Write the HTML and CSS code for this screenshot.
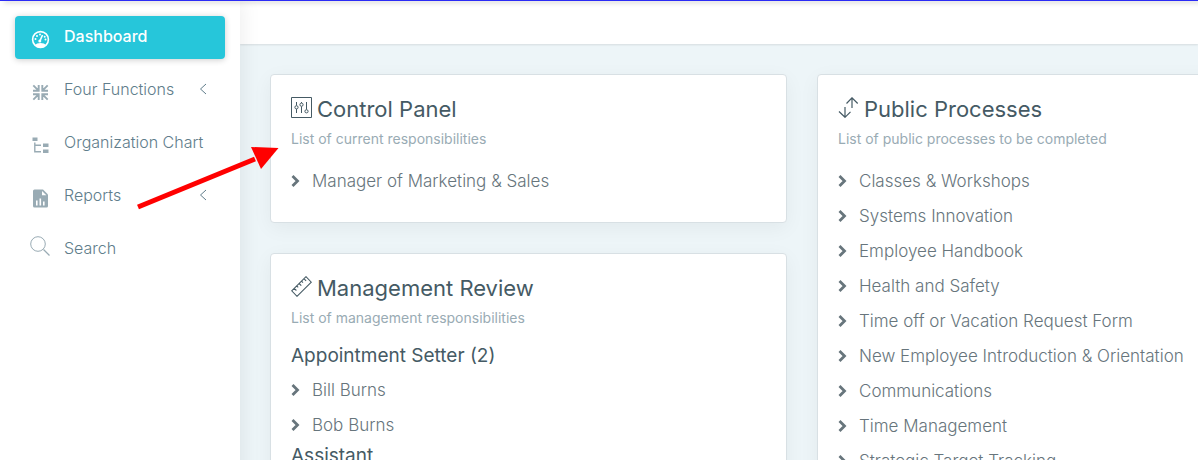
FILE: index.html
```
<!DOCTYPE html>
<html lang="en">
<head>
    <meta charset="UTF-8">
    <meta name="viewport" content="width=device-width, initial-scale=1.0">
    <title>Dashboard</title>
    <link rel="stylesheet" href="styles.css">
</head>
<body>

<!-- shared icons -->
<svg class="sprite" width="0" height="0">
    <symbol id="chevron-right" viewBox="0 0 10 14">
        <path d="M1.500 2l5 5-5 5" fill="none" stroke="currentColor" stroke-width="2.800"/>
    </symbol>
    <symbol id="angle-left" viewBox="0 0 8 12">
        <path d="M7 1L1.500 6 7 11" fill="none" stroke="currentColor" stroke-width="1"/>
    </symbol>
</svg>

<div class="top-line"></div>

<div class="wrapper">
    <aside class="sidebar">
        <nav>
            <ul class="menu">
                <li>
                    <a class="active" href="#">
                        <svg class="menu-icon" viewBox="0 0 20 20">
                            <circle cx="10.500" cy="9.500" r="7.900" fill="none" stroke="currentColor" stroke-width="1.600"/>
                            <path d="M5 15Q6.500 13 10.500 13T16 15Q13.500 17.800 10.500 17.800T5 15z" fill="currentColor"/>
                            <path d="M9.700 11.500L12.500 5" stroke="currentColor" stroke-width="1.600"/>
                            <circle cx="9.800" cy="10.900" r="1.500" fill="currentColor"/>
                            <circle cx="5.500" cy="9" r="1" fill="currentColor"/>
                            <circle cx="7" cy="6" r="1" fill="currentColor"/>
                            <circle cx="10" cy="4.500" r="1" fill="currentColor"/>
                            <circle cx="14.700" cy="6.800" r="1" fill="currentColor"/>
                            <circle cx="15.500" cy="9.500" r="1" fill="currentColor"/>
                        </svg>
                        <span>Dashboard</span>
                    </a>
                </li>
                <li>
                    <a href="#">
                        <svg class="menu-icon" viewBox="0 0 20 20">
                            <path d="M3.300 2.300l4.500 4.500M17.700 2.300l-4.500 4.500M3.300 16.700l4.500-4.500M17.700 16.700l-4.500-4.500M3 7.700h5.700V2M18 7.700h-5.700V2M3 11.300h5.700V17M18 11.300h-5.700V17" fill="none" stroke="currentColor" stroke-width="1.900"/>
                        </svg>
                        <span>Four Functions</span>
                        <svg class="arrow"><use href="#angle-left"/></svg>
                    </a>
                </li>
                <li>
                    <a href="#">
                        <svg class="menu-icon" viewBox="0 0 20 20">
                            <path d="M2.500 1.500h5V5h-5zM13 7.500h5.500V11H13zM13 13.500h5.500V17H13z" fill="currentColor"/>
                            <path d="M4.800 6.500v9.300H11M4.800 9.200H11" fill="none" stroke="currentColor" stroke-width="1.400"/>
                        </svg>
                        <span>Organization Chart</span>
                    </a>
                </li>
                <li>
                    <a href="#">
                        <svg class="menu-icon" viewBox="0 0 20 20">
                            <path d="M4.500.5H13l5 5v11.500q0 1.500-1.500 1.500h-12Q3 18.500 3 17V2Q3 .5 4.500.5z" fill="currentColor"/>
                            <path d="M12 2v4.300h4.300zM6 11.500h1.600v5H6zM9.500 9.500h1.600v7H9.500zM13 12.500h1.600v4H13z" fill="#fff"/>
                        </svg>
                        <span>Reports</span>
                        <svg class="arrow"><use href="#angle-left"/></svg>
                    </a>
                </li>
                <li>
                    <a class="search" href="#">
                        <svg class="menu-icon" viewBox="0 0 20 20">
                            <path d="M13.500 13.500l6 6" stroke="currentColor" stroke-width="1.300"/>
                            <circle cx="8" cy="8" r="7.300" fill="none" stroke="currentColor"/>
                        </svg>
                        <span>Search</span>
                    </a>
                </li>
            </ul>
        </nav>
    </aside>

    <div class="page">
        <header class="topbar"></header>
        <main class="content">
            <div class="column">
                <section class="card">
                    <h2>
                        <svg class="title-icon" viewBox="0 0 21 21">
                            <path d="M.5.500h20v20H.5zM5.500 5v3.500M5.500 12v4M10.500 5v1M10.500 9.500V16M15.500 5v7.500" fill="none" stroke="currentColor" stroke-width="1"/>
                            <g fill="none" stroke="currentColor" stroke-width="1">
                                <circle cx="5.500" cy="10.300" r="1.600"/>
                                <circle cx="10.500" cy="7.700" r="1.600"/>
                                <circle cx="15.500" cy="14.300" r="1.600"/>
                            </g>
                        </svg>
                        Control Panel
                    </h2>
                    <p class="subtitle">List of current responsibilities</p>
                    <ul class="list">
                        <li><a href="#"><svg class="bullet"><use href="#chevron-right"/></svg>Manager of Marketing &amp; Sales</a></li>
                    </ul>
                </section>

                <section class="card">
                    <h2>
                        <svg class="title-icon" viewBox="0 0 21 21">
                            <path d="M.7 14.800L15 .7l5.300 5.500L6 20.300zM3.200 12.300l2.200 2.200M5.700 9.900l1.500 1.500M8.100 7.500l2.200 2.200M10.500 5.100L12 6.600M12.900 2.700l2.200 2.200" fill="none" stroke="currentColor" stroke-width="1.100"/>
                        </svg>
                        Management Review
                    </h2>
                    <p class="subtitle">List of management responsibilities</p>
                    <h3>Appointment Setter (2)</h3>
                    <ul class="list">
                        <li><a href="#"><svg class="bullet"><use href="#chevron-right"/></svg>Bill Burns</a></li>
                        <li><a href="#"><svg class="bullet"><use href="#chevron-right"/></svg>Bob Burns</a></li>
                    </ul>
                    <h3>Assistant</h3>
                </section>
            </div>

            <div class="column">
                <section class="card">
                    <h2>
                        <svg class="title-icon" viewBox="0 0 21 21">
                            <path d="M7 10v10M1 14.500L7 20.300l5.500-5.500M14 11V1M8.500 6.500L14 .8l5.700 5.700" fill="none" stroke="currentColor" stroke-width="1.200"/>
                        </svg>
                        Public Processes
                    </h2>
                    <p class="subtitle">List of public processes to be completed</p>
                    <ul class="list">
                        <li><a href="#"><svg class="bullet"><use href="#chevron-right"/></svg>Classes &amp; Workshops</a></li>
                        <li><a href="#"><svg class="bullet"><use href="#chevron-right"/></svg>Systems Innovation</a></li>
                        <li><a href="#"><svg class="bullet"><use href="#chevron-right"/></svg>Employee Handbook</a></li>
                        <li><a href="#"><svg class="bullet"><use href="#chevron-right"/></svg>Health and Safety</a></li>
                        <li><a href="#"><svg class="bullet"><use href="#chevron-right"/></svg>Time off or Vacation Request Form</a></li>
                        <li><a href="#"><svg class="bullet"><use href="#chevron-right"/></svg>New Employee Introduction &amp; Orientation</a></li>
                        <li><a href="#"><svg class="bullet"><use href="#chevron-right"/></svg>Communications</a></li>
                        <li><a href="#"><svg class="bullet"><use href="#chevron-right"/></svg>Time Management</a></li>
                        <li><a href="#"><svg class="bullet"><use href="#chevron-right"/></svg>Strategic Target Tracking</a></li>
                    </ul>
                </section>
            </div>
        </main>
    </div>
</div>

<!-- red pointer to the control panel -->
<svg class="pointer" viewBox="0 0 142 64">
    <path d="M1 60L118 12" stroke="#f00" stroke-width="5"/>
    <path d="M114 0l27.500 1L124 22z" fill="#f00"/>
</svg>

</body>
</html>
```
FILE: styles.css
```
* {
    box-sizing: border-box;
}
body {
    margin: 0;
    height: 100vh;
    overflow: hidden;
    font-family: Inter, "Open Sans", sans-serif;
    font-size: 16px;
    font-weight: 300;
    color: #67757c;
    background-color: #edf5f8;
}
a {
    color: inherit;
    text-decoration: none;
}
ul {
    list-style: none;
    margin: 0;
    padding: 0;
}
.sprite {
    position: absolute;
}
.top-line {
    position: absolute;
    top: 0;
    left: 0;
    z-index: 5;
    width: 100%;
    height: 1px;
    background-color: #2b2bf5;
    box-shadow: 4px 1px 5px rgba(0, 0, 0, 0.5);
}
.wrapper {
    display: flex;
    min-height: 100vh;
}

/* sidebar */
.sidebar {
    position: relative;
    z-index: 2;
    flex: 0 0 240px;
    padding: 16px 15px;
    background-color: #fff;
    box-shadow: 1px 0 20px rgba(0, 0, 0, 0.08);
}
.menu {
    display: flex;
    flex-direction: column;
    gap: 10px;
}
.menu a {
    display: flex;
    align-items: center;
    height: 43px;
    padding: 0 18px 4px 15px;
    border-radius: 4px;
    color: #607d8b;
}
.menu a.active {
    background-color: #26c6da;
    color: #fff;
    font-weight: 500;
    box-shadow: 0 1px 6px rgba(0, 0, 0, 0.2);
}
.menu-icon {
    width: 20px;
    height: 20px;
    margin: 8px 14px 0 0;
    color: #99abb4;
}
.active .menu-icon {
    color: #fff;
}
.search .menu-icon {
    margin: 0 14px 4px 0;
}
.arrow {
    width: 8px;
    height: 12px;
    margin-left: auto;
}

/* main area */
.page {
    flex: 1;
    min-width: 0;
}
.topbar {
    height: 44px;
    background-color: #fff;
    box-shadow: 0 1px 2px rgba(0, 0, 0, 0.1);
}
.content {
    display: grid;
    grid-template-columns: 1fr 1fr;
    gap: 30px;
    min-width: 1124px;
    padding: 30px;
}
.column {
    display: flex;
    flex-direction: column;
    gap: 30px;
}
.card {
    padding: 20px 20px 24px;
    border: 1px solid #d8e0e4;
    border-radius: 4px;
    background-color: #fff;
    box-shadow: 0 5px 20px rgba(0, 0, 0, 0.05);
}
h2,
h3 {
    margin: 0;
    font-weight: 400;
    line-height: 28px;
    color: #455a64;
}
h2 {
    display: flex;
    align-items: center;
    gap: 5px;
    font-size: 22px;
}
h3 {
    margin-bottom: 2px;
    font-size: 19px;
}
.title-icon {
    width: 21px;
    height: 21px;
    margin-bottom: 3px;
}
.subtitle {
    margin: 6px 0 14px;
    font-size: 14px;
    font-weight: 400;
    line-height: 20px;
    color: #99abb4;
}
.list a {
    display: flex;
    align-items: center;
    height: 35px;
    font-size: 17px;
}
.bullet {
    width: 10px;
    height: 14px;
    margin-right: 11px;
}

.pointer {
    position: absolute;
    top: 147px;
    left: 137px;
    z-index: 10;
    width: 142px;
    height: 64px;
}
```
